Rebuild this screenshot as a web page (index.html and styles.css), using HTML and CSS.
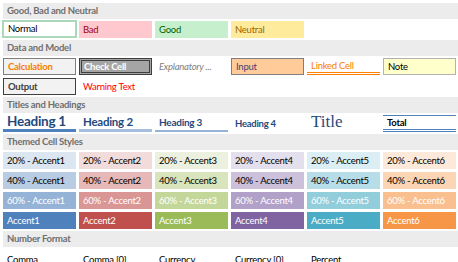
FILE: index.html
```html
<!DOCTYPE html>
<html lang="en">

<head>
    <meta charset="UTF-8">
    <title>Cell Styles</title>
    <link rel="stylesheet" href="styles.css">
</head>

<body>
    <div class="gallery">
        <div class="band">Good, Bad and Neutral</div>
        <div class="row">
            <div class="cell normal">Normal</div>
            <div class="cell bad">Bad</div>
            <div class="cell good">Good</div>
            <div class="cell neutral">Neutral</div>
        </div>

        <div class="band">Data and Model</div>
        <div class="row">
            <div class="cell calc">Calculation</div>
            <div class="cell check">Check Cell</div>
            <div class="cell explain">Explanatory ...</div>
            <div class="cell input">Input</div>
            <div class="cell linked">Linked Cell</div>
            <div class="cell note">Note</div>
        </div>
        <div class="row">
            <div class="cell output">Output</div>
            <div class="cell warning">Warning Text</div>
        </div>

        <div class="band">Titles and Headings</div>
        <div class="row">
            <div class="cell h1">Heading 1</div>
            <div class="cell h2">Heading 2</div>
            <div class="cell h3">Heading 3</div>
            <div class="cell h4">Heading 4</div>
            <div class="cell title">Title</div>
            <div class="cell total">Total</div>
        </div>

        <div class="band">Themed Cell Styles</div>
        <div class="row">
            <div class="cell a1-20">20% - Accent1</div>
            <div class="cell a2-20">20% - Accent2</div>
            <div class="cell a3-20">20% - Accent3</div>
            <div class="cell a4-20">20% - Accent4</div>
            <div class="cell a5-20">20% - Accent5</div>
            <div class="cell a6-20">20% - Accent6</div>
        </div>
        <div class="row">
            <div class="cell a1-40">40% - Accent1</div>
            <div class="cell a2-40">40% - Accent2</div>
            <div class="cell a3-40">40% - Accent3</div>
            <div class="cell a4-40">40% - Accent4</div>
            <div class="cell a5-40">40% - Accent5</div>
            <div class="cell a6-40">40% - Accent6</div>
        </div>
        <div class="row">
            <div class="cell light a1-60">60% - Accent1</div>
            <div class="cell light a2-60">60% - Accent2</div>
            <div class="cell light a3-60">60% - Accent3</div>
            <div class="cell light a4-60">60% - Accent4</div>
            <div class="cell light a5-60">60% - Accent5</div>
            <div class="cell light a6-60">60% - Accent6</div>
        </div>
        <div class="row">
            <div class="cell light a1">Accent1</div>
            <div class="cell light a2">Accent2</div>
            <div class="cell light a3">Accent3</div>
            <div class="cell light a4">Accent4</div>
            <div class="cell light a5">Accent5</div>
            <div class="cell light a6">Accent6</div>
        </div>

        <div class="band">Number Format</div>
        <div class="row last">
            <div class="cell">Comma</div>
            <div class="cell">Comma [0]</div>
            <div class="cell">Currency</div>
            <div class="cell">Currency [0]</div>
            <div class="cell">Percent</div>
        </div>
    </div>
</body>

</html>
```

FILE: styles.css
```css
* {
    margin: 0px;
    padding: 0px;
    box-sizing: border-box;
}

body {
    background-color: white;
    font-family: Lato, "Liberation Sans", sans-serif;
    font-size: 9.5px;
    letter-spacing: -0.25px;
    color: black;
    overflow: hidden;
}

.gallery {
    padding-top: 3px;
    padding-left: 3px;
}

.band {
    height: 16px;
    margin-top: 1px;
    padding-left: 4px;
    line-height: 16px;
    background-color: #ececec;
    color: #6f6f6f;
    font-weight: bold;
}

.gallery .band:first-child {
    margin-top: 0px;
}

.row {
    height: 20px;
    padding-top: 2px;
    display: grid;
    grid-template-columns: repeat(6, 73px);
    column-gap: 3px;
}

.row.last {
    padding-top: 4px;
}

.cell {
    height: 17px;
    padding-left: 4px;
    line-height: 17px;
    white-space: nowrap;
    overflow: hidden;
}

.normal {
    border: 2px solid #a9d9b8;
    margin: -1px -1px 0px -1px;
    height: 18px;
    line-height: 14px;
}

.bad {
    background-color: #ffc7ce;
    color: #9c0006;
}

.good {
    background-color: #c6efce;
    color: #006100;
}

.neutral {
    background-color: #ffeb9c;
    color: #9c6500;
}

.calc {
    background-color: #f2f2f2;
    border: 1px solid #7f7f7f;
    color: #fa7d00;
    font-weight: bold;
    line-height: 15px;
}

.check {
    background-color: #a5a5a5;
    border: 3px double #3f3f3f;
    color: white;
    font-weight: bold;
    padding-left: 2px;
    line-height: 11px;
}

.explain {
    color: #7f7f7f;
    font-style: italic;
}

.input {
    background-color: #ffcc99;
    border: 1px solid #7f7f7f;
    color: #3f3f76;
    line-height: 15px;
}

.linked {
    color: #fa7d00;
    border-bottom: 3px double #ff8001;
    line-height: 15px;
}

.note {
    background-color: #ffffcc;
    border: 1px solid #b2b2b2;
    line-height: 15px;
}

.output {
    background-color: #f2f2f2;
    border: 1px solid #3f3f3f;
    color: #3f3f3f;
    font-weight: bold;
    line-height: 15px;
}

.warning {
    color: #ff0000;
}

.h1,
.h2,
.h3,
.h4 {
    color: #1f497d;
    font-weight: bold;
    overflow: visible;
}

.h1 {
    font-size: 13.5px;
    border-bottom: 3px solid #4f81bd;
    line-height: 12px;
}

.h2 {
    font-size: 11.5px;
    border-bottom: 3px solid #a7bfde;
    line-height: 13px;
}

.h3 {
    font-size: 10px;
    border-bottom: 2px solid #95b3d7;
    line-height: 15px;
}

.title {
    font-family: "Liberation Serif", serif;
    font-size: 17px;
    letter-spacing: 0px;
    color: #1f497d;
    line-height: 13px;
    overflow: visible;
}

.total {
    font-weight: bold;
    border-top: 1px solid #4f81bd;
    border-bottom: 3px double #4f81bd;
    line-height: 13px;
}

.a1-20 { background-color: #dce6f1; }
.a2-20 { background-color: #f2dcdb; }
.a3-20 { background-color: #ebf1de; }
.a4-20 { background-color: #e4dfec; }
.a5-20 { background-color: #daeef3; }
.a6-20 { background-color: #fde9d9; }

.a1-40 { background-color: #b8cce4; }
.a2-40 { background-color: #e6b8b7; }
.a3-40 { background-color: #d8e4bc; }
.a4-40 { background-color: #ccc0da; }
.a5-40 { background-color: #b7dee8; }
.a6-40 { background-color: #fcd5b4; }

.a1-60 { background-color: #95b3d7; }
.a2-60 { background-color: #da9694; }
.a3-60 { background-color: #c4d79b; }
.a4-60 { background-color: #b1a0c7; }
.a5-60 { background-color: #92cddc; }
.a6-60 { background-color: #fabf8f; }

.a1 { background-color: #4f81bd; }
.a2 { background-color: #c0504d; }
.a3 { background-color: #9bbb59; }
.a4 { background-color: #8064a2; }
.a5 { background-color: #4bacc6; }
.a6 { background-color: #f79646; }

.light {
    color: white;
}
```
